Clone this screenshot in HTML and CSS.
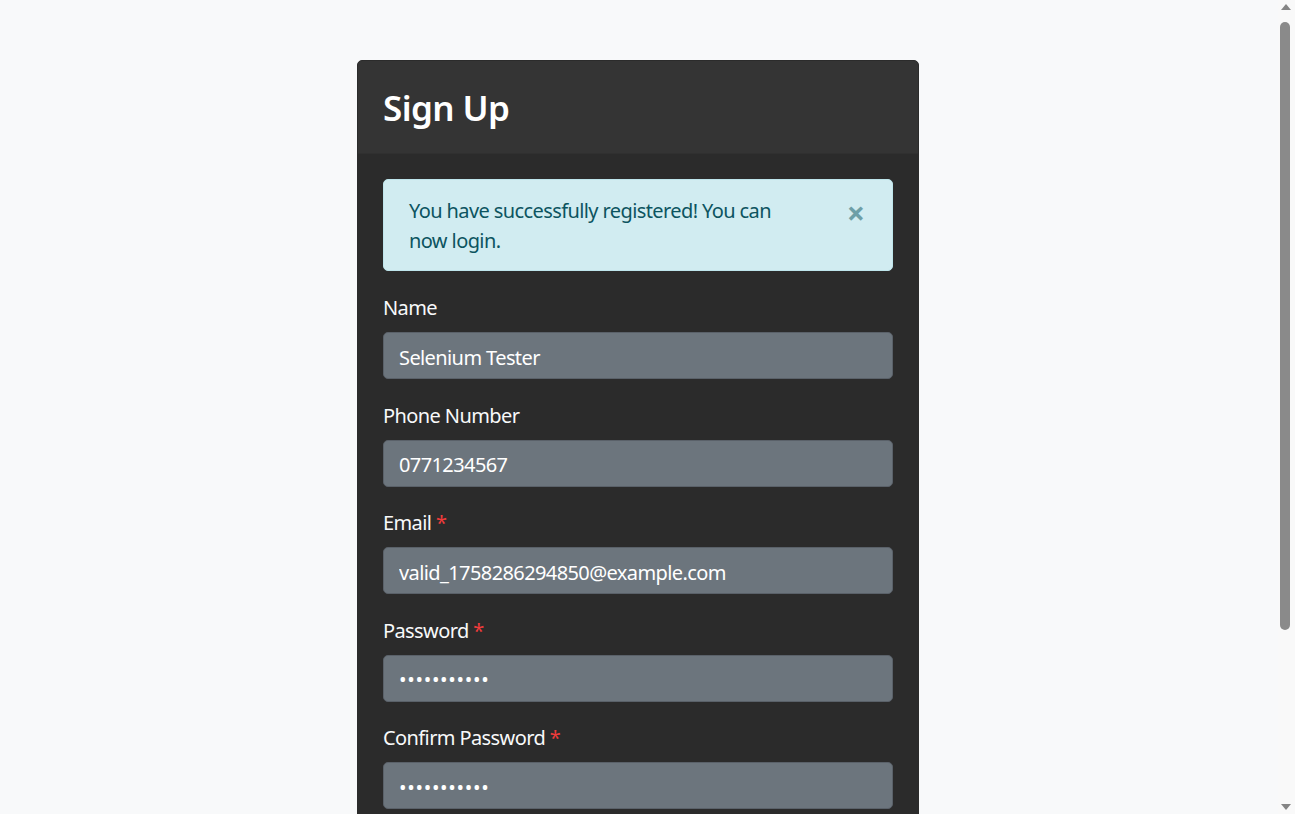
FILE: index.html
```html
<!DOCTYPE html>
<html lang="en">
<head>
<meta charset="utf-8">
<title>Sign Up</title>
<link rel="stylesheet" href="styles.css">
</head>
<body>
<main class="page">
  <section class="card">
    <header class="card-header">
      <h3 class="card-title">Sign Up</h3>
    </header>
    <div class="card-body">
      <div class="alert" role="alert">
        <span class="alert-text">You have successfully registered! You can now login.</span>
        <button class="alert-close" type="button" aria-label="Close">×</button>
      </div>
      <form class="form">
        <div class="form-group">
          <label class="form-label" for="name">Name</label>
          <input class="form-control" id="name" type="text" value="Selenium Tester">
        </div>
        <div class="form-group">
          <label class="form-label" for="phone">Phone Number</label>
          <input class="form-control" id="phone" type="text" value="0771234567">
        </div>
        <div class="form-group">
          <label class="form-label" for="email">Email <span class="req">*</span></label>
          <input class="form-control" id="email" type="email" value="valid_1758286294850@example.com">
        </div>
        <div class="form-group">
          <label class="form-label" for="password">Password <span class="req">*</span></label>
          <input class="form-control form-control-secret" id="password" type="password" value="Password123">
        </div>
        <div class="form-group">
          <label class="form-label" for="confirm">Confirm Password <span class="req">*</span></label>
          <input class="form-control form-control-secret" id="confirm" type="password" value="Password123">
        </div>
      </form>
    </div>
  </section>
</main>
<div class="scrollbar" aria-hidden="true">
  <svg class="sb-arrow" width="17" height="17" viewBox="0 0 17 17"><path d="M2 10 L7 4 L12 10 Z"/></svg>
  <div class="sb-track"><div class="sb-thumb"></div></div>
  <svg class="sb-arrow" width="17" height="17" viewBox="0 0 17 17"><path d="M2 7 L7 13 L12 7 Z"/></svg>
</div>
</body>
</html>
```
FILE: styles.css
```css
html {
  background: #f8f9fa;
}
body {
  margin: 0;
  font-family: "Noto Sans", "Open Sans", sans-serif;
  font-size: 20px;
  line-height: 1.5;
  letter-spacing: -0.6px;
  color: #212529;
}
.page {
  display: flex;
  justify-content: center;
  padding: 60px 19px 80px 0;
}
.card {
  width: 562px;
  background: #2b2b2b;
  border: 1px solid #2b2b2b;
  border-radius: 5px;
  overflow: hidden;
  box-sizing: border-box;
}
.card-header {
  background: #343434;
  padding: 26px 25px 24px;
  border-bottom: 1px solid #303030;
}
.card-title {
  margin: 0;
  font-size: 35px;
  line-height: 42px;
  font-weight: 600;
  color: #ffffff;
}
.card-body {
  padding: 25px;
}
.alert {
  position: relative;
  background: #d1ecf1;
  color: #0c5460;
  border: 1px solid #bee5eb;
  border-radius: 5px;
  padding: 16px 80px 14px 25px;
  margin-bottom: 21px;
}
.alert-close {
  position: absolute;
  top: 0;
  right: 0;
  padding: 17px 27px 15px 25px;
  background: none;
  border: 0;
  font-family: inherit;
  font-size: 32px;
  font-weight: 700;
  line-height: 1;
  color: inherit;
  opacity: 0.5;
  cursor: pointer;
}
.form {
  display: flex;
  flex-direction: column;
}
.form-group {
  display: flex;
  flex-direction: column;
  margin-bottom: 20.5px;
}
.form-label {
  color: #f8f9fa;
  padding-top: 1px;
  margin-bottom: 9px;
}
.req {
  color: #f03b3b;
}
.form-control {
  box-sizing: border-box;
  height: 47px;
  width: 100%;
  padding: 9px 15px 6px;
  font-family: inherit;
  font-size: 20px;
  letter-spacing: -0.6px;
  line-height: 1.5;
  color: #ffffff;
  background: #6c757d;
  border: 1px solid #5a6169;
  border-radius: 5px;
  outline: none;
}
.form-control-secret {
  letter-spacing: 0.7px;
}
.scrollbar {
  position: fixed;
  top: 0;
  right: 0;
  bottom: 0;
  width: 17px;
  background: #f9f9f9;
  display: flex;
  flex-direction: column;
}
.sb-arrow {
  display: block;
  flex: none;
  margin-left: 1px;
  fill: #858585;
}
.sb-track {
  flex: 1;
  padding: 5px 0 0 2px;
}
.sb-thumb {
  width: 10px;
  height: 608px;
  border-radius: 5px;
  background: #8a8a8a;
}
```
